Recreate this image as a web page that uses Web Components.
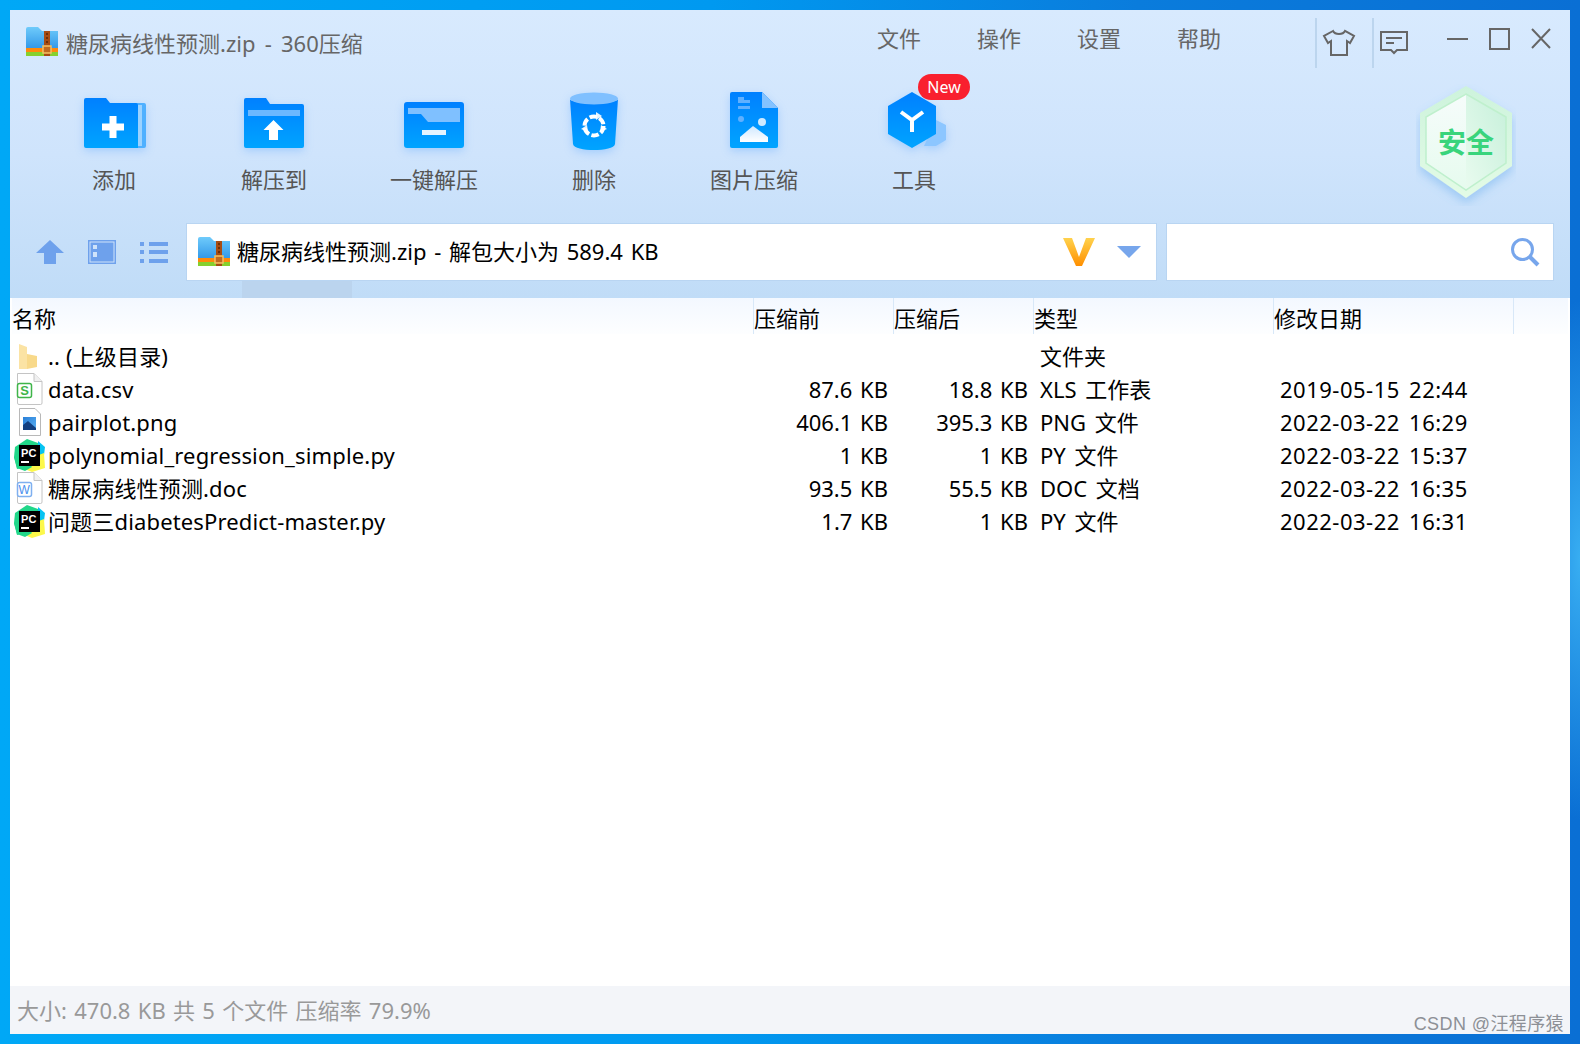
<!DOCTYPE html>
<html lang="zh">
<head>
<meta charset="utf-8">
<title>360压缩</title>
<style>
  html, body { margin: 0; height: 100%; }
  body {
    width: 1580px;
    height: 1044px;
    overflow: hidden;
    box-sizing: border-box;
    padding: 10px;
    font-family: "Noto Sans", "Noto Sans CJK SC", sans-serif;
    background:
      radial-gradient(ellipse 60px 260px at 1580px 560px, #38aef2 0, rgba(56,174,242,0) 100%),
      linear-gradient(90deg, #00a8f6 0, #0099f0 45%, #0a7cdc 72%, #0a6fd4 100%);
  }
</style>
</head>
<body>
<app-window>
  <title-bar slot="title" text="糖尿病线性预测.zip - 360压缩"></title-bar>

  <tool-bar slot="tools">
    <tool-btn>
      <svg slot="icon" width="80" height="60" viewBox="0 0 80 60">
        <defs><linearGradient id="g1" x1="0" y1="0" x2="0" y2="1"><stop offset="0" stop-color="#0080ff"/><stop offset="1" stop-color="#00a4ff"/></linearGradient></defs>
        <path d="M36 11H70a2 2 0 0 1 2 2V54a2 2 0 0 1-2 2H60V11Z" fill="#4fb0ff"/>
        <rect x="64" y="13" width="4" height="41" fill="#9bd2ff"/>
        <path d="M12 6H32L36 11H62a2 2 0 0 1 2 2V56H12a2 2 0 0 1-2-2V8a2 2 0 0 1 2-2Z" fill="url(#g1)"/>
        <path d="M35.500 24H42.500V31.500H50V38.500H42.500V46H35.500V38.500H28V31.500H35.500Z" fill="#fff"/>
      </svg>
      添加
    </tool-btn>
    <tool-btn>
      <svg slot="icon" width="80" height="60" viewBox="0 0 80 60">
        <defs><linearGradient id="g2" x1="0" y1="0" x2="0" y2="1"><stop offset="0" stop-color="#0080ff"/><stop offset="1" stop-color="#00a4ff"/></linearGradient></defs>
        <path d="M12 6H32L36 12H68a2 2 0 0 1 2 2V54a2 2 0 0 1-2 2H12a2 2 0 0 1-2-2V8a2 2 0 0 1 2-2Z" fill="url(#g2)"/>
        <rect x="14" y="18" width="52" height="6" fill="#6cb8ff"/>
        <path d="M39.500 28L49.500 38H44V48H35V38H29.500Z" fill="#fff"/>
      </svg>
      解压到
    </tool-btn>
    <tool-btn>
      <svg slot="icon" width="80" height="60" viewBox="0 0 80 60">
        <defs><linearGradient id="g3" x1="0" y1="0" x2="0" y2="1"><stop offset="0" stop-color="#0080ff"/><stop offset="1" stop-color="#00a4ff"/></linearGradient></defs>
        <rect x="10" y="10" width="60" height="46" rx="3" fill="url(#g3)"/>
        <path d="M14 16H66V30H34L27 22H14Z" fill="#7fc0ff"/>
        <rect x="28" y="38" width="24" height="5" fill="#e6f4ff"/>
      </svg>
      一键解压
    </tool-btn>
    <tool-btn>
      <svg slot="icon" width="80" height="60" viewBox="0 0 80 60">
        <defs><linearGradient id="g4" x1="0" y1="0" x2="0" y2="1"><stop offset="0" stop-color="#0080ff"/><stop offset="1" stop-color="#00a4ff"/></linearGradient></defs>
        <path d="M16 7C16 12 64 12 64 7L61 52C60 60 20 60 19 52Z" fill="url(#g4)"/>
        <ellipse cx="40" cy="6.500" rx="24" ry="6" fill="#80c0ff"/>
        <circle cx="40" cy="34" r="9.500" fill="none" stroke="#fff" stroke-width="4" stroke-dasharray="7.500 2.500"/>
        <path d="M42 20L48 24L42 28ZM27 37L33 33L34 40ZM53 37L47 33L46 40Z" fill="#fff" opacity=".9"/>
      </svg>
      删除
    </tool-btn>
    <tool-btn>
      <svg slot="icon" width="80" height="60" viewBox="0 0 80 60">
        <defs><linearGradient id="g5" x1="0" y1="0" x2="0" y2="1"><stop offset="0" stop-color="#0080ff"/><stop offset="1" stop-color="#00a4ff"/></linearGradient>
        <linearGradient id="g5b" x1="0" y1="0" x2="0" y2="1"><stop offset="0" stop-color="#cfe8ff"/><stop offset="1" stop-color="#fff"/></linearGradient></defs>
        <path d="M18 0H48L64 16V54a2 2 0 0 1-2 2H18a2 2 0 0 1-2-2V2a2 2 0 0 1 2-2Z" fill="url(#g5)"/>
        <path d="M48 0L64 16H48Z" fill="#84c2ff"/>
        <path d="M24 5H30V8H36V11H30V14H36V17H24V14H30V11H24V8H30V8H24Z" fill="#60b0ff"/>
        <circle cx="27" cy="27" r="3" fill="#60b0ff"/>
        <circle cx="48" cy="30" r="4" fill="#cfeaff"/>
        <path d="M26 50L26 45L39 34L54 45V50Z" fill="url(#g5b)"/>
      </svg>
      图片压缩
    </tool-btn>
    <tool-btn badge="New">
      <svg slot="icon" width="80" height="60" viewBox="0 0 80 60">
        <defs><linearGradient id="g6" x1="0" y1="0" x2="0" y2="1"><stop offset="0" stop-color="#0080ff"/><stop offset="1" stop-color="#00a4ff"/></linearGradient></defs>
        <path d="M62 28L72 33V48L62 54L50 54Z" fill="#8cc6ff"/>
        <path d="M38 0L62 14V42L38 56L14 42V14Z" fill="url(#g6)"/>
        <path d="M27 20L38 28L49 20M38 28V40" fill="none" stroke="#fff" stroke-width="4"/>
      </svg>
      工具
    </tool-btn>
    <shield-badge slot="right">安全</shield-badge>
  </tool-bar>

  <address-row slot="address" text="糖尿病线性预测.zip - 解包大小为 589.4 KB"></address-row>

  <file-list slot="list">
    <file-row icon="up" name=".. (上级目录)" type="文件夹"></file-row>
    <file-row icon="csv" name="data.csv" before="87.6 KB" after="18.8 KB" type="XLS 工作表" date="2019-05-15 22:44"></file-row>
    <file-row icon="png" name="pairplot.png" before="406.1 KB" after="395.3 KB" type="PNG 文件" date="2022-03-22 16:29"></file-row>
    <file-row icon="pc" name="polynomial_regression_simple.py" before="1 KB" after="1 KB" type="PY 文件" date="2022-03-22 15:37"></file-row>
    <file-row icon="doc" name="糖尿病线性预测.doc" before="93.5 KB" after="55.5 KB" type="DOC 文档" date="2022-03-22 16:35"></file-row>
    <file-row icon="pc" name="问题三diabetesPredict-master.py" before="1.7 KB" after="1 KB" type="PY 文件" date="2022-03-22 16:31"></file-row>
  </file-list>

  <status-bar slot="status">大小: 470.8 KB 共 5 个文件 压缩率 79.9%</status-bar>
</app-window>

<script>
// zip folder icon, used in title bar and in address box
const zipIcon = `
  <svg width="32" height="30" viewBox="0 0 32 30">
    <defs><linearGradient id="zf" x1="0" y1="0" x2="0" y2="1"><stop offset="0" stop-color="#6fcbfb"/><stop offset="1" stop-color="#3197e8"/></linearGradient></defs>
    <path d="M0 2a2 2 0 0 1 2-2H12L16 4H32V22H0Z" fill="url(#zf)"/>
    <rect x="0" y="21" width="32" height="4" fill="#ff8a0c"/>
    <rect x="0" y="25" width="32" height="4" fill="#86d02e"/>
    <rect x="18" y="4" width="6" height="25" fill="#a84c12"/>
    <path d="M20 6h2v2h-2zM20 10h2v2h-2zM20 14h2v2h-2z" fill="#6e2f08"/>
    <rect x="17" y="19" width="8" height="7" fill="#c06a20" stroke="#f6c163" stroke-width="1.500"/>
  </svg>`;

const pycharm = `
  <svg width="36" height="33" viewBox="0 0 36 33" style="overflow:visible">
    <path d="M3 6L15 -2L26 2L30 14L14 26L5 28L2 16Z" fill="#21d789"/>
    <path d="M26 0L33 6L32 14L26 12Z" fill="#07c3f2"/>
    <path d="M32 12L33 27L20 31L10 27L22 16Z" fill="#fcf84a"/>
    <path d="M2 16L5 27L13 30L20 26L10 14Z" fill="#21d789"/>
    <rect x="7" y="4" width="21" height="21" fill="#000"/>
    <text x="9" y="15.500" font-family="Liberation Sans, sans-serif" font-size="11" font-weight="700" fill="#fff">PC</text>
    <rect x="9" y="20" width="8" height="2" fill="#fff"/>
  </svg>`;

const page = `<path d="M5.500 -1.500H22L30 6.500V28a1.500 1.500 0 0 1-1.500 1.500H7a1.500 1.500 0 0 1-1.500-1.500Z" fill="#fff" stroke="#c4c4c4"/><path d="M22 -1.500V6.500H30" fill="#f0f0f0" stroke="#c4c4c4"/>`;

const fileIcons = {
  up: `<svg width="36" height="33" viewBox="0 0 36 33" style="overflow:visible">
      <path d="M15 12L25 14V25L15 27Z" fill="#f8d98a"/>
      <path d="M7 2L15 5V27L7 27Z" fill="#fbe3a4"/>
    </svg>`,
  csv: `<svg width="36" height="33" viewBox="0 0 36 33" style="overflow:visible">${page}
      <rect x="5.500" y="8.500" width="14" height="14" rx="2" fill="#fff" stroke="#3fb54a" stroke-width="1.500"/>
      <text x="8.300" y="20" font-family="Liberation Sans, sans-serif" font-size="13" font-weight="700" fill="#3fb54a">S</text>
    </svg>`,
  png: `<svg width="36" height="33" viewBox="0 0 36 33" style="overflow:visible">
      <defs><linearGradient id="pb" x1="0" y1="0" x2="1" y2="1"><stop offset="0" stop-color="#2a7fd8"/><stop offset="1" stop-color="#5ab0f2"/></linearGradient></defs>
      <path d="M7.500 .5H23L28.500 6V27.500H7.500Z" fill="#fff" stroke="#b8b8b8"/>
      <rect x="11" y="9" width="13" height="13" fill="url(#pb)"/>
      <path d="M11 22V17L16 13L24 20V22Z" fill="#123f80"/>
    </svg>`,
  pc: pycharm,
  doc: `<svg width="36" height="33" viewBox="0 0 36 33" style="overflow:visible">${page}
      <rect x="5.500" y="8.500" width="14" height="14" rx="2" fill="#fff" stroke="#7fb0f0" stroke-width="1.500"/>
      <text x="6.500" y="20" font-family="Liberation Sans, sans-serif" font-size="12" fill="#4a90ee">W</text>
    </svg>`
};

class AppWindow extends HTMLElement {
  constructor(){
    super();
    this.attachShadow({mode:"open"}).innerHTML = `
      <style>
        :host{
          display : flex;
          flex-direction : column;
          position : relative;
          width : 1560px;
          height : 1024px;
          overflow : hidden;
          background : #c0dcf7;
        }
        .top{ flex : none; background : linear-gradient(180deg,#d8eafe 0,#cfe4fc 50%,#c0dcf7 100%); }
        .list{ flex : 1; display : flex; min-height : 0; padding : 0 2px; background : #fff; }
        .status{ flex : none; }
        .mark{
          position : absolute;
          right : 6px;
          bottom : 0;
          font : 18px/20px "Liberation Sans","Noto Sans CJK SC",sans-serif;
          letter-spacing : .4px;
          color : #8d9096;
          white-space : nowrap;
        }
      </style>
      <div class="top">
        <slot name="title"></slot>
        <slot name="tools"></slot>
        <slot name="address"></slot>
      </div>
      <div class="list"><slot name="list"></slot></div>
      <div class="status"><slot name="status"></slot></div>
      <div class="mark">CSDN @汪程序猿</div>
    `;
  }
}
customElements.define('app-window', AppWindow);

class TitleBar extends HTMLElement {
  connectedCallback(){
    this.attachShadow({mode:"open"}).innerHTML = `
      <style>
        :host{
          display : flex;
          height : 60px;
          color : #666;
          font-size : 22px;
        }
        .logo{ margin : 17px 8px 0 16px; height : 30px; }
        .name{ line-height : 30px; margin-top : 18px; white-space : nowrap; word-spacing : 3.5px; }
        .menu{ margin-left : auto; display : flex; gap : 56px; line-height : 30px; margin-top : 13px; }
        .sys{ display : flex; margin-left : 94px; height : 50px; margin-top : 8px; }
        .skin{ width : 50px; border-left : 2px solid #bcd5ee; display : flex; align-items : center; padding-left : 5px; }
        .ctl{ display : flex; margin-left : 18px; gap : 21px; padding-right : 19px; }
        svg{ display : block; }
      </style>
      <div class="logo">${zipIcon}</div>
      <div class="name">${this.getAttribute('text')}</div>
      <div class="menu"><span>文件</span><span>操作</span><span>设置</span><span>帮助</span></div>
      <div class="sys">
        <div class="skin">
          <svg width="34" height="30" viewBox="0 0 34 30" fill="none" stroke="#666" stroke-width="2">
            <path d="M11 3L2 8L6 15L9 13V27H25V13L28 15L32 8L23 3C21 7 13 7 11 3Z"/>
          </svg>
        </div>
        <div class="skin">
          <svg width="30" height="26" viewBox="0 0 30 26" fill="none" stroke="#666" stroke-width="2">
            <path d="M2 2H28V20H18L15 23L12 20H2Z"/><path d="M7 8H23M7 13H15"/>
          </svg>
        </div>
        <div class="ctl">
          <svg width="21" height="40" viewBox="0 0 21 40" stroke="#666" stroke-width="2"><path d="M0 21H21"/></svg>
          <svg width="21" height="40" viewBox="0 0 21 40" fill="none" stroke="#666" stroke-width="2"><rect x="1" y="11" width="19" height="20"/></svg>
          <svg width="20" height="40" viewBox="0 0 20 40" fill="none" stroke="#666" stroke-width="2"><path d="M1 11L19 30M19 11L1 30"/></svg>
        </div>
      </div>
    `;
  }
}
customElements.define('title-bar', TitleBar);

class ToolBar extends HTMLElement {
  constructor(){
    super();
    this.attachShadow({mode:"open"}).innerHTML = `
      <style>
        :host{
          display : flex;
          height : 153px;
          padding-left : 24px;
          box-sizing : border-box;
        }
        .tools{ display : flex; padding-top : 22px; }
        .right{ margin-left : auto; margin-right : 54px; padding-top : 14px; }
      </style>
      <div class="tools"><slot></slot></div>
      <div class="right"><slot name="right"></slot></div>
    `;
  }
}
customElements.define('tool-bar', ToolBar);

class ToolBtn extends HTMLElement {
  connectedCallback(){
    const badge = this.getAttribute('badge');
    this.attachShadow({mode:"open"}).innerHTML = `
      <style>
        :host{
          display : flex;
          flex-direction : column;
          align-items : center;
          position : relative;
          width : 160px;
          color : #555;
          font-size : 22px;
          line-height : 30px;
        }
        .icon{ height : 60px; margin-bottom : 12px; filter : drop-shadow(0 3px 4px rgba(40,140,255,.25)); }
        .badge{
          position : absolute;
          left : 84px;
          top : -18px;
          width : 52px;
          height : 26px;
          border-radius : 13px;
          background : #f9202e;
          color : #fff;
          font-size : 16px;
          line-height : 26px;
          text-align : center;
        }
      </style>
      <div class="icon"><slot name="icon"></slot></div>
      <slot></slot>
      ${badge ? `<div class="badge">${badge}</div>` : ''}
    `;
  }
}
customElements.define('tool-btn', ToolBtn);

class ShieldBadge extends HTMLElement {
  constructor(){
    super();
    this.attachShadow({mode:"open"}).innerHTML = `
      <style>
        :host{
          display : grid;
          width : 100px;
          height : 122px;
          color : #39d47c;
          font-size : 28px;
          font-weight : 700;
        }
        svg, .txt{ grid-area : 1 / 1; }
        .txt{ display : flex; align-items : center; justify-content : center; padding-bottom : 8px; }
      </style>
      <svg width="100" height="122" viewBox="0 0 100 122">
        <defs>
          <linearGradient id="sh" x1="0" y1="0" x2="0" y2="1"><stop offset="0" stop-color="#cdf3dc"/><stop offset="1" stop-color="#e3fbe6"/></linearGradient>
          <linearGradient id="sl" x1="0" y1="0" x2="0" y2="1"><stop offset="0" stop-color="#f6fcfb"/><stop offset="1" stop-color="#e6fbee"/></linearGradient>
          <linearGradient id="sr" x1="1" y1="0" x2="0" y2="1"><stop offset="0" stop-color="#c6f0da"/><stop offset="1" stop-color="#e9fbef"/></linearGradient>
          <filter id="sd" x="-20%" y="-20%" width="140%" height="140%"><feDropShadow dx="0" dy="5" stdDeviation="5" flood-color="#5aa5ea" flood-opacity=".4"/></filter>
        </defs>
        <path d="M50 2L96 29V82L50 114L4 82V29Z" fill="url(#sh)" filter="url(#sd)"/>
        <path d="M50 10V106L10 79V33Z" fill="url(#sl)"/>
        <path d="M50 10V106L90 79V33Z" fill="url(#sr)"/>
        <path d="M50 10L90 33V79L50 106L10 79V33Z" fill="none" stroke="#bff0cd" stroke-width="1.500"/>
      </svg>
      <div class="txt"><slot></slot></div>
    `;
  }
}
customElements.define('shield-badge', ShieldBadge);

class AddressRow extends HTMLElement {
  connectedCallback(){
    this.attachShadow({mode:"open"}).innerHTML = `
      <style>
        :host{
          display : flex;
          position : relative;
          height : 75px;
          padding : 0 16px 17px 14px;
          box-sizing : border-box;
          color : #000;
          font-size : 22px;
        }
        .nav{ display : flex; width : 156px; margin-right : 6px; }
        .nav div{ width : 52px; display : flex; align-items : center; justify-content : center; }
        .box{
          background : #fff;
          border : 1px solid #b9d5f2;
          box-sizing : border-box;
          display : flex;
          align-items : center;
        }
        .addr{ width : 971px; margin-right : 9px; position : relative; padding-left : 11px; }
        .addr .txt{ margin : 0 0 4px 7px; white-space : nowrap; word-spacing : 2px; }
        .vip{ margin-left : auto; margin-right : 22px; }
        .tri{ margin-right : 15px; }
        .find{ flex : 1; justify-content : flex-end; padding-right : 13px; }
        .tab{ position : absolute; left : 232px; top : 58px; width : 110px; height : 17px; background : #bbd4ee; }
        svg{ display : block; }
      </style>
      <div class="nav">
        <div><svg width="28" height="26" viewBox="0 0 28 26"><path d="M14 1L28 14H20V25H8V14H0Z" fill="#6ea1ec"/></svg></div>
        <div><svg width="28" height="24" viewBox="0 0 28 24"><rect x="1" y="1" width="26" height="22" fill="#6ea1ec" stroke="#6ea1ec" stroke-width="2"/><rect x="2" y="2" width="24" height="20" fill="none" stroke="#cfe3fa" stroke-width="1"/><rect x="5" y="5" width="4" height="4" fill="#cfe3fa"/><rect x="5" y="12" width="4" height="5" fill="#cfe3fa"/></svg></div>
        <div><svg width="28" height="21" viewBox="0 0 28 21" fill="#6ea1ec"><rect y="0" width="4" height="4"/><rect y="8" width="4" height="4"/><rect y="17" width="4" height="4"/><rect x="9" y="0" width="19" height="4"/><rect x="9" y="8" width="19" height="4"/><rect x="9" y="17" width="19" height="4"/></svg></div>
      </div>
      <div class="box addr">
        ${zipIcon}
        <span class="txt">${this.getAttribute('text')}</span>
        <svg class="vip" width="32" height="30" viewBox="0 0 32 30">
          <defs><linearGradient id="vv" x1="0" y1="0" x2="0" y2="1"><stop offset="0" stop-color="#ffd24d"/><stop offset="1" stop-color="#ff8f00"/></linearGradient></defs>
          <path d="M0 1H9L16 20L23 1H32L19 29H13Z" fill="url(#vv)"/>
        </svg>
        <svg class="tri" width="24" height="14" viewBox="0 0 24 14"><path d="M0 1H24L12 13Z" fill="#77a6ec"/></svg>
      </div>
      <div class="box find">
        <svg width="30" height="30" viewBox="0 0 30 30" fill="none" stroke="#77a6ec" stroke-width="3"><circle cx="12.500" cy="12.500" r="10"/><path d="M20 20L28 28" stroke-width="4"/></svg>
      </div>
      <div class="tab"></div>
    `;
  }
}
customElements.define('address-row', AddressRow);

// the columns are shared by head and rows
const gridCols = '742px 140px 140px 240px 240px 1fr';

class FileList extends HTMLElement {
  constructor(){
    super();
    this.attachShadow({mode:"open"}).innerHTML = `
      <style>
        :host{
          display : block;
          flex : 1;
          background : #fff;
          color : #000;
          font-size : 22px;
        }
        .head{
          display : grid;
          grid-template-columns : ${gridCols};
          height : 36px;
          line-height : 40px;
          background : linear-gradient(180deg,#f3f8ff,#fdfeff);
        }
        .head div{ border-right : 1px solid #d8e8f8; box-sizing : border-box; height : 36px; white-space : nowrap; }
        .head div:last-child{ border : 0; }
        .rows{ padding-top : 8px; }
      </style>
      <div class="head"><div>名称</div><div>压缩前</div><div>压缩后</div><div>类型</div><div>修改日期</div><div></div></div>
      <div class="rows"><slot></slot></div>
    `;
  }
}
customElements.define('file-list', FileList);

class FileRow extends HTMLElement {
  connectedCallback(){
    const a = n => this.getAttribute(n) || '';
    this.attachShadow({mode:"open"}).innerHTML = `
      <style>
        :host{
          display : grid;
          grid-template-columns : ${gridCols};
          height : 33px;
          line-height : 29px;
          white-space : nowrap;
        }
        .name{ display : flex; letter-spacing : .15px; }
        .ico{ width : 36px; height : 33px; flex : none; }
        .num{ text-align : right; padding-right : 6px; word-spacing : 2px; }
        .txt{ padding-left : 6px; word-spacing : 3px; }
        .date{ letter-spacing : .5px; }
      </style>
      <div class="name"><div class="ico">${fileIcons[a('icon')]}</div><span>${a('name')}</span></div>
      <div class="num">${a('before')}</div>
      <div class="num">${a('after')}</div>
      <div class="txt">${a('type')}</div>
      <div class="txt date">${a('date')}</div>
    `;
  }
}
customElements.define('file-row', FileRow);

class StatusBar extends HTMLElement {
  constructor(){
    super();
    this.attachShadow({mode:"open"}).innerHTML = `
      <style>
        :host{
          display : block;
          height : 48px;
          padding-left : 7px;
          background : #f3f5f9;
          color : #999;
          font-size : 22px;
          line-height : 48px;
          word-spacing : 1.600px;
        }
      </style>
      <slot></slot>
    `;
  }
}
customElements.define('status-bar', StatusBar);
</script>
</body>
</html>
